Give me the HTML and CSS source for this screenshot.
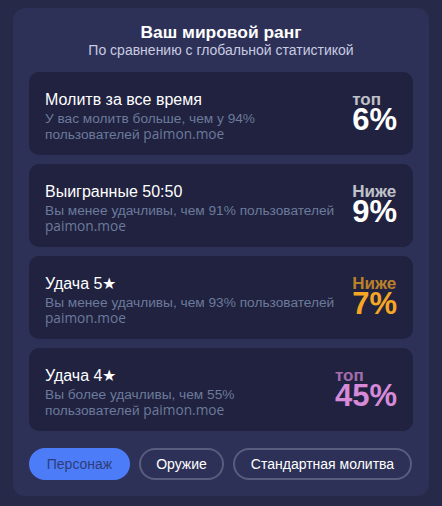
FILE: index.html
```html
<!DOCTYPE html>
<html lang="ru">
<head>
<meta charset="utf-8">
<link rel="stylesheet" href="styles.css">
</head>
<body>
<div class="panel">
  <div class="head">
    <div class="title">Ваш мировой ранг</div>
    <div class="subtitle">По сравнению с глобальной статистикой</div>
  </div>
  <div class="list">
    <div class="row">
      <div class="info">
        <div class="name">Молитв за все время</div>
        <div class="desc">У вас молитв больше, чем у 94%<br>пользователей <span class="site">paimon.moe</span></div>
      </div>
      <div class="rank white">
        <div class="label">топ</div>
        <div class="pct">6%</div>
      </div>
    </div>
    <div class="row">
      <div class="info">
        <div class="name">Выигранные 50:50</div>
        <div class="desc">Вы менее удачливы, чем 91% пользователей<br><span class="site">paimon.moe</span></div>
      </div>
      <div class="rank white">
        <div class="label">Ниже</div>
        <div class="pct">9%</div>
      </div>
    </div>
    <div class="row">
      <div class="info">
        <div class="name">Удача 5★</div>
        <div class="desc">Вы менее удачливы, чем 93% пользователей<br><span class="site">paimon.moe</span></div>
      </div>
      <div class="rank orange">
        <div class="label">Ниже</div>
        <div class="pct">7%</div>
      </div>
    </div>
    <div class="row">
      <div class="info">
        <div class="name">Удача 4★</div>
        <div class="desc">Вы более удачливы, чем 55%<br>пользователей <span class="site">paimon.moe</span></div>
      </div>
      <div class="rank purple">
        <div class="label">топ</div>
        <div class="pct">45%</div>
      </div>
    </div>
  </div>
  <div class="tabs">
    <button class="tab active">Персонаж</button>
    <button class="tab">Оружие</button>
    <button class="tab">Стандартная молитва</button>
  </div>
</div>
</body>
</html>
```
FILE: styles.css
```css
* { box-sizing: border-box; }
html, body { margin: 0; }
body {
  background: #262947;
  font-family: "Liberation Sans", Arial, sans-serif;
  padding: 8px 13px 9px 13px;
  color: #fff;
}
.panel {
  background: #2d3158;
  border-radius: 12px;
  padding: 14px 16px 16px 16px;
  width: 416px;
}
.head {
  text-align: center;
  margin-bottom: 14px;
}
.title {
  font-weight: bold;
  font-size: 17.4px;
  line-height: 20px;
}
.subtitle {
  font-size: 14px;
  line-height: 16px;
  color: #c9cbe0;
}
.list {
  display: flex;
  flex-direction: column;
  gap: 9px;
}
.row {
  background: #20223f;
  border-radius: 10px;
  height: 83px;
  padding: 6px 16px 0 16px;
  display: flex;
  align-items: center;
  justify-content: space-between;
}
.info { flex: 1; min-width: 0; }
.name {
  font-size: 16px;
  line-height: 18px;
  color: #fff;
  margin-bottom: 2px;
}
.desc {
  font-size: 13.7px;
  line-height: 15px;
  color: #6c7a9c;
  white-space: nowrap;
}
.site { font-family: "Open Sans", sans-serif; }
.rank {
  display: flex;
  flex-direction: column;
  align-items: flex-start;
  font-weight: bold;
  flex: none;
  margin-top: -6px;
}
.label {
  font-size: 17px;
  line-height: 12px;
  opacity: 0.72;
}
.pct {
  font-size: 31px;
  line-height: 28px;
}
.white { color: #fff; }
.orange { color: #f5a623; }
.purple { color: #d68ad8; }
.tabs {
  display: flex;
  gap: 9px;
  margin-top: 17px;
}
.tab {
  font-family: "Liberation Sans", Arial, sans-serif;
  font-size: 14px;
  height: 32px;
  border-radius: 16px;
  background: transparent;
  color: #fff;
  border: 2px solid #585d7e;
  padding: 0;
  white-space: nowrap;
  flex: none;
}
.tab:nth-child(2) { width: 85px; }
.tab:nth-child(3) { width: 179px; }
.tab.active {
  background: #4d7cf8;
  border-color: #4d7cf8;
  color: #2f3c7a;
  width: 101px;
}
```
